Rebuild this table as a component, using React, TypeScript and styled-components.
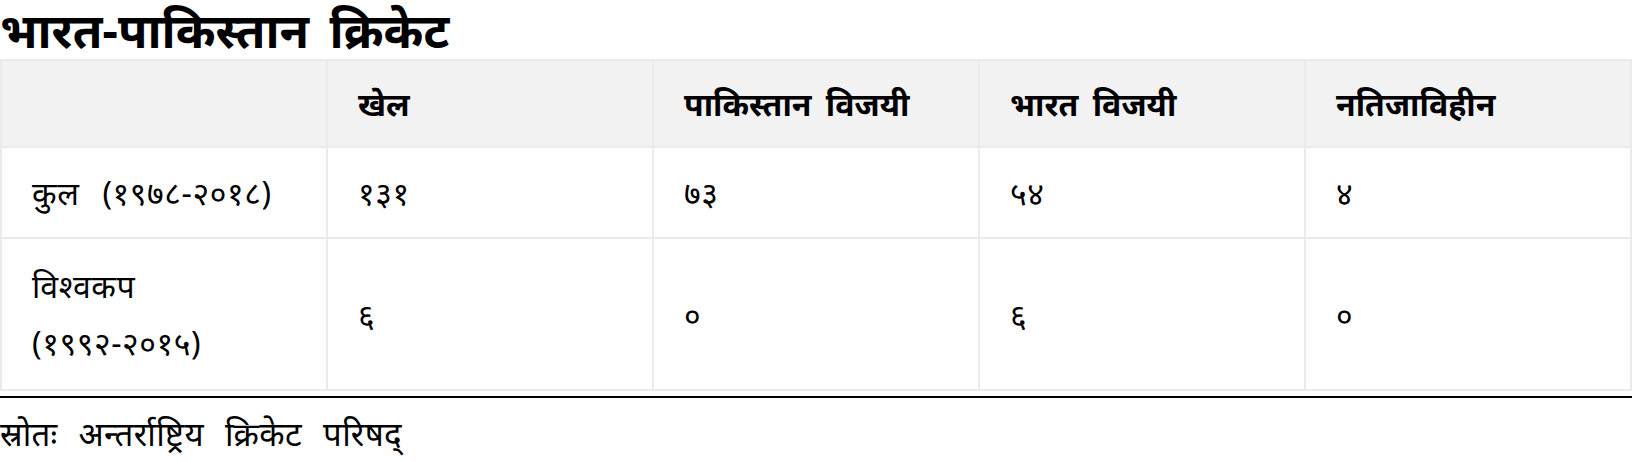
import React from 'react';
import styled, { createGlobalStyle } from 'styled-components';

const GlobalStyle = createGlobalStyle`
  html, body {
    margin: 0;
    padding: 0;
    background: #fff;
    color: #000;
    font-family: "Noto Sans", "Lohit Devanagari", "Kalimati", "Mangal", sans-serif;
  }
`;

const Wrapper = styled.section`
  width: 1632px;
`;

const Title = styled.h2`
  margin: 0;
  font-size: 48px;
  line-height: 59px;
  font-weight: 700;
  word-spacing: 8px;
  white-space: nowrap;
`;

const Table = styled.table`
  width: 1632px;
  border-collapse: collapse;
  table-layout: fixed;
  font-size: 32px;
`;

const HeadCell = styled.th`
  background: #f2f2f2;
  border: 2px solid #ebebeb;
  height: 85px;
  padding: 0 30px;
  text-align: left;
  font-weight: 700;
  word-spacing: 6px;
`;

const Cell = styled.td<{ $tall?: boolean }>`
  border: 2px solid #ebebeb;
  height: ${(p) => (p.$tall ? '150px' : '89px')};
  padding: 0 30px;
  line-height: ${(p) => (p.$tall ? '57px' : '40px')};
  vertical-align: middle;
  word-spacing: 14px;
  letter-spacing: 0.6px;
`;

const Rule = styled.hr`
  margin: 5px 0 0;
  border: none;
  height: 2px;
  background: #000;
`;

const Source = styled.p`
  margin: 0;
  padding-top: 14px;
  font-size: 33px;
  line-height: 44px;
  word-spacing: 12px;
  letter-spacing: 0.4px;
`;

const headers = ['', 'खेल', 'पाकिस्तान विजयी', 'भारत विजयी', 'नतिजाविहीन'];

const rows = [
  { label: ['कुल (१९७८-२०१८)'], values: ['१३१', '७३', '५४', '४'], tall: false },
  { label: ['विश्वकप', '(१९९२-२०१५)'], values: ['६', '०', '६', '०'], tall: true },
];

const App: React.FC = () => {
  return (
    <>
      <GlobalStyle />
      <Wrapper>
        <Title>भारत-पाकिस्तान क्रिकेट</Title>
        <Table>
          <thead>
            <tr>
              {headers.map((h, i) => (
                <HeadCell key={i}>{h}</HeadCell>
              ))}
            </tr>
          </thead>
          <tbody>
            {rows.map((r, i) => (
              <tr key={i}>
                <Cell $tall={r.tall}>
                  {r.label.map((l, j) => (
                    <div key={j}>{l}</div>
                  ))}
                </Cell>
                {r.values.map((v, j) => (
                  <Cell key={j} $tall={r.tall}>{v}</Cell>
                ))}
              </tr>
            ))}
          </tbody>
        </Table>
        <Rule />
        <Source>स्रोतः अन्तर्राष्ट्रिय क्रिकेट परिषद्</Source>
      </Wrapper>
    </>
  );
};

export default App;
